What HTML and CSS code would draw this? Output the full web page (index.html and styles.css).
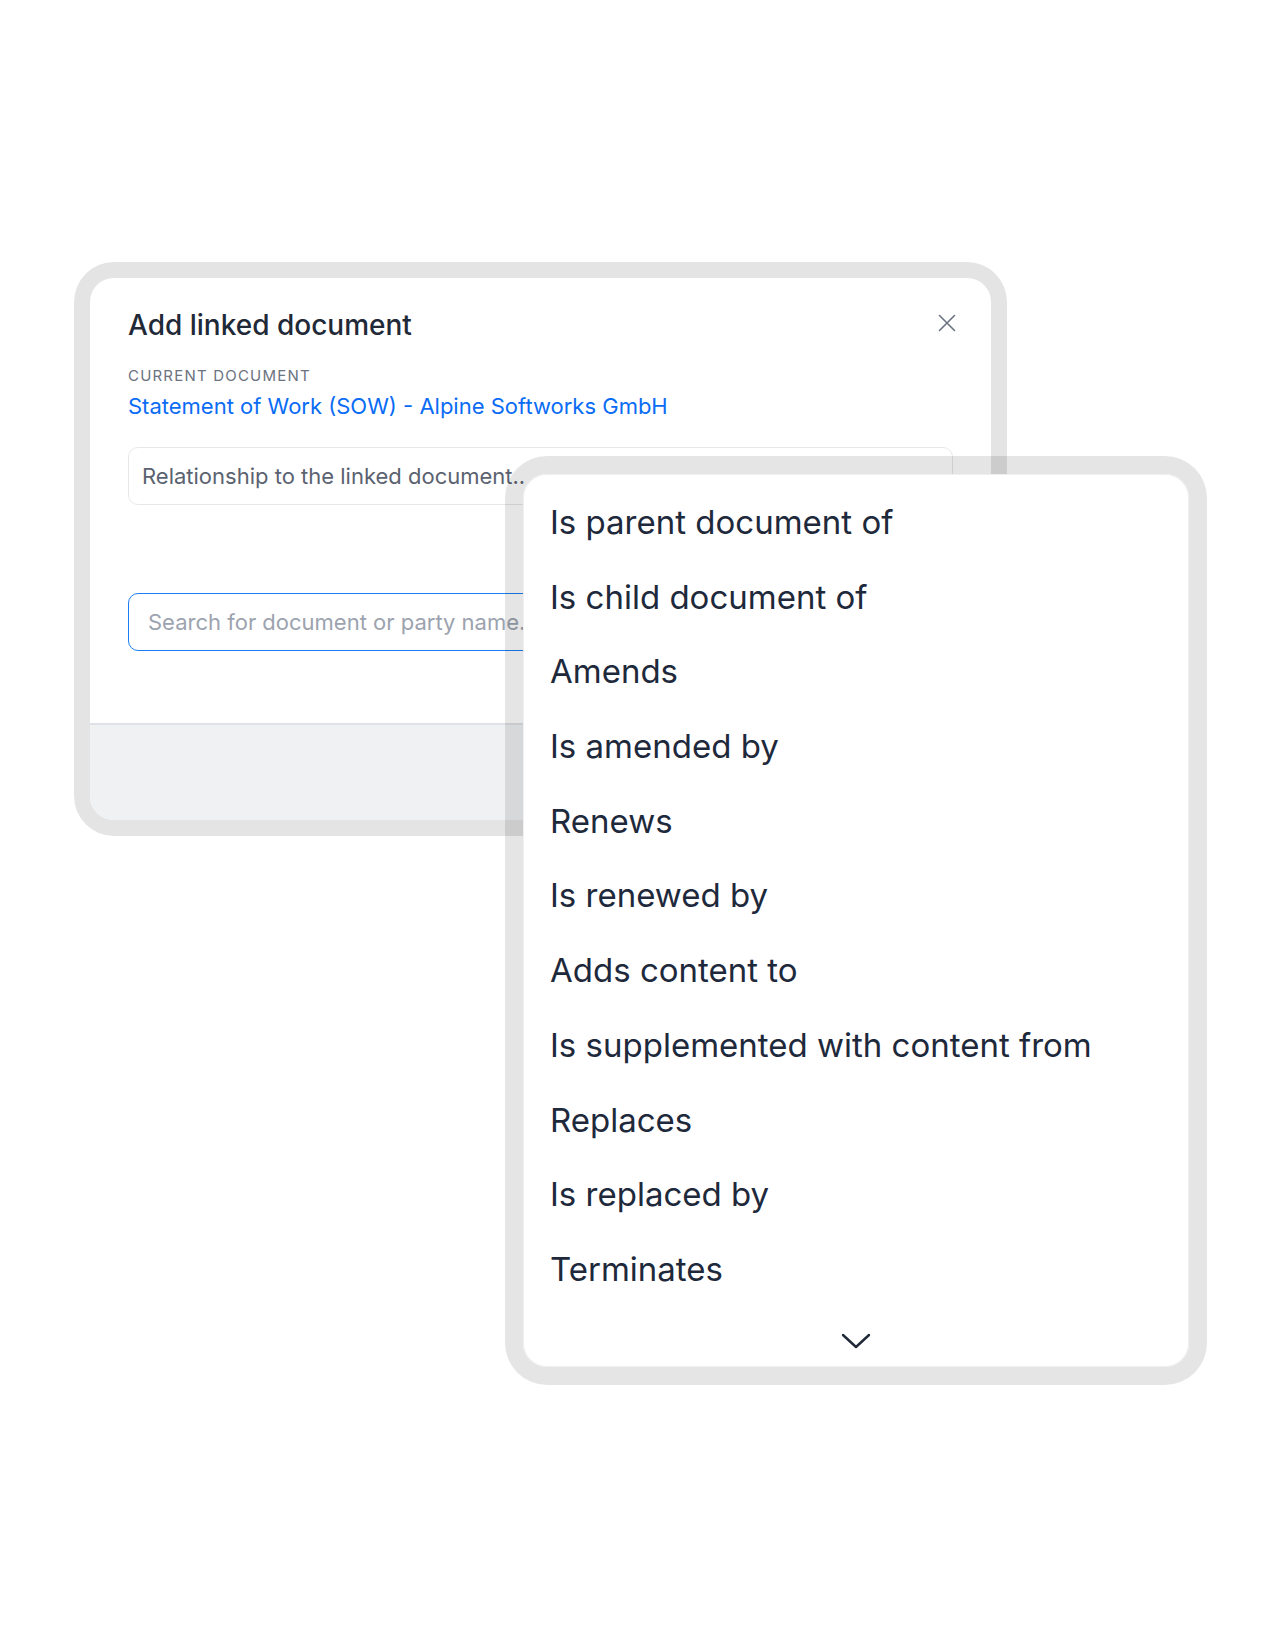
FILE: index.html
```html
<!DOCTYPE html>
<html lang="en">
<head>
    <meta charset="UTF-8">
    <meta name="viewport" content="width=device-width, initial-scale=1.0">
    <title>Add linked document</title>
    <link rel="stylesheet" href="styles.css">
</head>
<body>
    <div class="stage">
        <div class="dialog">
            <div class="dialog-body">
                <div class="dialog-head">
                    <h1>Add linked document</h1>
                    <button class="close" aria-label="Close">
                        <svg width="18" height="18" viewBox="0 0 18 18">
                            <path d="M1.5 1.5 L16.5 16.5 M16.5 1.5 L1.5 16.5" stroke="#6b7280" stroke-width="1.6" stroke-linecap="round" fill="none"/>
                        </svg>
                    </button>
                </div>
                <div class="label">Current document</div>
                <a class="doc-link" href="#">Statement of Work (SOW) - Alpine Softworks GmbH</a>
                <input type="text" class="field" placeholder="Relationship to the linked document..">
                <input type="text" class="field field-search" placeholder="Search for document or party name...">
            </div>
            <div class="dialog-foot"></div>
        </div>

        <!-- open relationship menu, lies over the dialog -->
        <div class="dropdown">
            <div class="dropdown-inner">
                <ul class="options">
                    <li>Is parent document of</li>
                    <li>Is child document of</li>
                    <li>Amends</li>
                    <li>Is amended by</li>
                    <li>Renews</li>
                    <li>Is renewed by</li>
                    <li>Adds content to</li>
                    <li>Is supplemented with content from</li>
                    <li>Replaces</li>
                    <li>Is replaced by</li>
                    <li>Terminates</li>
                </ul>
                <div class="more">
                    <svg width="30" height="16" viewBox="0 0 30 16">
                        <path d="M2 2 L15 14 L28 2" stroke="#1f2937" stroke-width="2.4" stroke-linecap="round" stroke-linejoin="round" fill="none"/>
                    </svg>
                </div>
            </div>
        </div>
    </div>
</body>
</html>
```

FILE: styles.css
```css
body {
    font-family: "Inter", "Noto Sans", sans-serif;
    background-color: #fff;
    margin: 0;
    padding: 0;
    color: #1f2937;
}
.stage {
    position: relative;
    height: 1648px;
    padding: 262px 0 0 74px;
    box-sizing: border-box;
}
.dialog {
    width: 933px;
    height: 574px;
    box-sizing: border-box;
    border: 16px solid rgba(0,0,0,0.105);
    border-radius: 40px;
    background: #fff;
    background-clip: padding-box;
    overflow: hidden;
    display: flex;
    flex-direction: column;
}
.dialog-body {
    padding: 30px 38px 0;
    height: 445px;
    box-sizing: border-box;
}
.dialog-head {
    display: flex;
    justify-content: space-between;
    align-items: flex-start;
}
h1 {
    margin: 0;
    font-size: 28px;
    font-weight: 500;
    line-height: 34px;
    color: #1f2937;
}
.close {
    border: none;
    background: none;
    padding: 0;
    margin: 6px -3px 0 0;
    cursor: pointer;
    display: flex;
}
.label {
    margin-top: 24px;
    font-size: 15px;
    line-height: 20px;
    letter-spacing: 0.08em;
    text-transform: uppercase;
    color: #6b7280;
}
.doc-link {
    display: block;
    margin-top: 6px;
    font-size: 22px;
    line-height: 28px;
    color: #0a6cf5;
    text-decoration: none;
}
.field {
    display: block;
    width: 100%;
    height: 58px;
    box-sizing: border-box;
    margin-top: 27px;
    padding: 0 13px;
    font-family: inherit;
    font-size: 22px;
    border: 1.5px solid #e5e7eb;
    border-radius: 10px;
    background: #fff;
    outline: none;
}
.field::placeholder {
    color: #5b6270;
}
.field-search {
    margin-top: 88px;
    padding: 0 19px;
    border-color: #1a7ef2;
}
.field-search::placeholder {
    color: #9ca3af;
}
.dialog-foot {
    flex: 1;
    background: #f0f1f3;
    border-top: 2px solid #dfe2e6;
}
.dropdown {
    position: absolute;
    left: 505px;
    top: 456px;
    width: 702px;
    height: 929px;
    box-sizing: border-box;
    border: 18px solid rgba(0,0,0,0.1);
    border-radius: 42px;
    background: #fff;
    background-clip: padding-box;
}
.dropdown-inner {
    height: 100%;
    box-sizing: border-box;
    border: 1px solid #eef0f3;
    border-radius: 24px;
}
.options {
    list-style: none;
    margin: 0;
    padding: 10px 0 0 26px;
}
.options li {
    height: 74.7px;
    line-height: 74.7px;
    font-size: 33px;
    color: #1e293b;
}
.more {
    display: flex;
    justify-content: center;
    padding-top: 26px;
}
```
